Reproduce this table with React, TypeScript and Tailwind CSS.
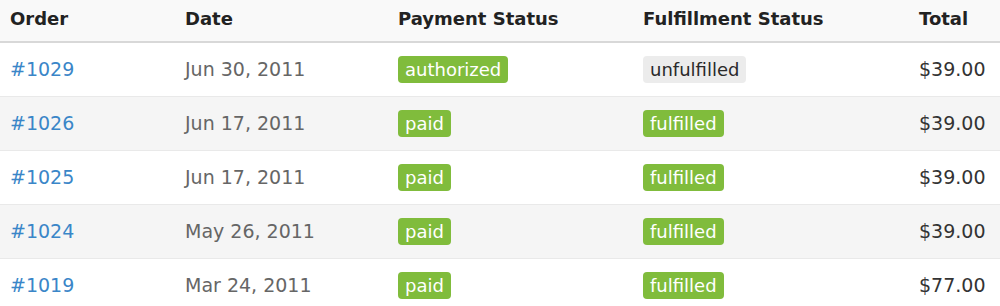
import React from 'react';

type Order = {
  id: string;
  date: string;
  payment: string;
  fulfillment: string;
  total: string;
};

const orders: Order[] = [
  { id: '#1029', date: 'Jun 30, 2011', payment: 'authorized', fulfillment: 'unfulfilled', total: '$39.00' },
  { id: '#1026', date: 'Jun 17, 2011', payment: 'paid', fulfillment: 'fulfilled', total: '$39.00' },
  { id: '#1025', date: 'Jun 17, 2011', payment: 'paid', fulfillment: 'fulfilled', total: '$39.00' },
  { id: '#1024', date: 'May 26, 2011', payment: 'paid', fulfillment: 'fulfilled', total: '$39.00' },
  { id: '#1019', date: 'Mar 24, 2011', payment: 'paid', fulfillment: 'fulfilled', total: '$77.00' },
];

const cols = 'grid grid-cols-[175px_213px_245px_276px_1fr] items-center pl-[10px]';

function Badge({ label }: { label: string }) {
  const muted = label === 'unfulfilled';
  return (
    <span
      className={
        muted
          ? 'inline-block h-[27px] rounded-[4px] bg-[#ececec] px-[7px] text-[18px] leading-[27px] text-[#2a2a2a]'
          : 'inline-block h-[27px] rounded-[4px] bg-[#80bc3c] px-[7px] text-[18px] leading-[27px] text-white'
      }
    >
      {label}
    </span>
  );
}

export default function App() {
  return (
    <div className="h-[306px] w-[1000px] overflow-hidden bg-white font-['DejaVu_Sans',sans-serif]">
      {/* Header */}
      <div className={`${cols} h-[43px] border-b-2 border-[#d8d8d8] bg-[#f9f9f9] pb-[4px] text-[18px] font-bold text-[#222]`}>
        <div>Order</div>
        <div>Date</div>
        <div>Payment Status</div>
        <div>Fulfillment Status</div>
        <div>Total</div>
      </div>

      {orders.map((o, i) => (
        <div
          key={o.id}
          className={`${cols} h-[54px] border-b border-[#e9e9e9] text-[19px] ${i % 2 === 1 ? 'bg-[#f5f5f5]' : 'bg-white'}`}
        >
          <div className="text-[#3a86c8]">{o.id}</div>
          <div className="text-[#666]">{o.date}</div>
          <div>
            <Badge label={o.payment} />
          </div>
          <div>
            <Badge label={o.fulfillment} />
          </div>
          <div className="text-[#333]">{o.total}</div>
        </div>
      ))}
    </div>
  );
}
